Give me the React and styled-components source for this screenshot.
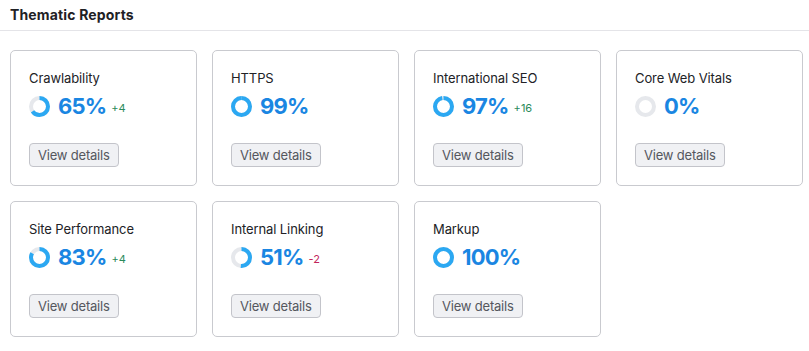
import React from 'react';
import styled, { createGlobalStyle } from 'styled-components';

const GlobalStyle = createGlobalStyle`
  body {
    margin: 0;
    background: #ffffff;
    font-family: 'Inter', 'Liberation Sans', sans-serif;
  }
`;

const reports = [
  { name: 'Crawlability', value: 65, delta: '+4' },
  { name: 'HTTPS', value: 99 },
  { name: 'International SEO', value: 97, delta: '+16' },
  { name: 'Core Web Vitals', value: 0 },
  { name: 'Site Performance', value: 83, delta: '+4' },
  { name: 'Internal Linking', value: 51, delta: '-2' },
  { name: 'Markup', value: 100 },
];

function Ring({ value }) {
  const r = 8.5;
  const c = 2 * Math.PI * r;
  return (
    <svg width='21' height='21' viewBox='0 0 21 21'>
      <circle cx='10.5' cy='10.5' r={r} fill='none' stroke='#e6e8ec' strokeWidth='4' />
      {value > 0 && (
        <circle
          cx='10.5'
          cy='10.5'
          r={r}
          fill='none'
          stroke='#2ba8f2'
          strokeWidth='4'
          strokeDasharray={`${(c * value) / 100} ${c}`}
          transform='rotate(-90 10.5 10.5)'
        />
      )}
    </svg>
  );
}

function ReportCard({ report }) {
  const negative = report.delta && report.delta.startsWith('-');
  return (
    <Card>
      <CardTitle>{report.name}</CardTitle>
      <ValueRow>
        <Ring value={report.value} />
        <Percent>{report.value}%</Percent>
        {report.delta && <Delta $negative={negative}>{report.delta}</Delta>}
      </ValueRow>
      <DetailsButton type='button'>View details</DetailsButton>
    </Card>
  );
}

export default function App() {
  return (
    <>
      <GlobalStyle />
      <Page>
        <Header>
          <Title>Thematic Reports</Title>
        </Header>
        <Grid>
          {reports.map((r) => (
            <ReportCard key={r.name} report={r} />
          ))}
        </Grid>
      </Page>
    </>
  );
}

const Page = styled.div`
  width: 809px;
  height: 351px;
  background: #ffffff;
`;

const Header = styled.div`
  height: 31px;
  box-sizing: border-box;
  border-bottom: 1px solid #e4e4e8;
  padding: 6px 10px 0;
`;

const Title = styled.div`
  font-size: 14px;
  line-height: 18px;
  font-weight: 700;
  color: #1f2125;
  letter-spacing: 0.15px;
`;

const Grid = styled.div`
  display: grid;
  grid-template-columns: repeat(4, 187px);
  grid-auto-rows: 136px;
  gap: 15px;
  padding: 19px 10px;
`;

const Card = styled.div`
  box-sizing: border-box;
  border: 1px solid #c9cacf;
  border-radius: 5px;
  padding: 19px 18px 0;
  display: flex;
  flex-direction: column;
  align-items: flex-start;
`;

const CardTitle = styled.div`
  font-size: 13px;
  line-height: 16px;
  color: #212226;
  letter-spacing: -0.1px;
`;

const ValueRow = styled.div`
  display: flex;
  align-items: center;
  height: 28px;
  margin-top: 6px;
`;

const Percent = styled.span`
  font-size: 22px;
  font-weight: 700;
  color: #1a86e2;
  margin-left: 8px;
  letter-spacing: -0.8px;
`;

const Delta = styled.span`
  font-size: 11px;
  color: ${(p) => (p.$negative ? '#c2245b' : '#2a8a5a')};
  margin-left: 5px;
  margin-top: 4px;
`;

const DetailsButton = styled.button`
  margin-top: 23px;
  height: 24px;
  padding: 0 8px;
  border: 1px solid #c3c4ca;
  border-radius: 4px;
  background: #f0f1f4;
  font-family: 'Inter', 'Liberation Sans', sans-serif;
  font-size: 13px;
  letter-spacing: -0.2px;
  color: #55575e;
  cursor: pointer;
`;
